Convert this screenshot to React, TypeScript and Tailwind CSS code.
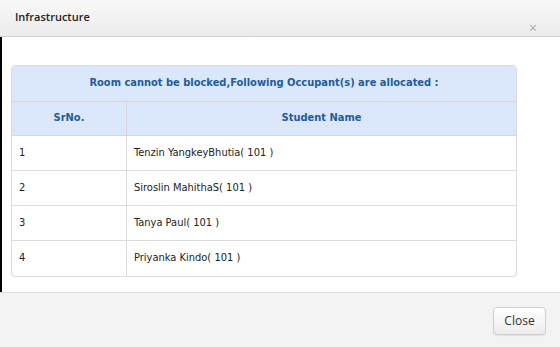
import React from "react";

const rows = [
  { n: "1", name: "Tenzin YangkeyBhutia( 101 )" },
  { n: "2", name: "Siroslin MahithaS( 101 )" },
  { n: "3", name: "Tanya Paul( 101 )" },
  { n: "4", name: "Priyanka Kindo( 101 )" },
];

export default function App() {
  return (
    <div className="w-[560px] h-[347px] bg-white flex flex-col overflow-hidden" style={{ fontFamily: '"Open Sans", sans-serif' }}>
      <div className="h-[37px] shrink-0 flex items-start justify-between bg-gradient-to-b from-[#f8f8f8] to-[#ececec] border-b border-[#cfcfcf] pl-[15px] pr-[23px]">
        <div className="pt-[9px] text-[11px] font-semibold text-[#222]">Infrastructure</div>
        <div className="pt-[20px] text-[14px] leading-[16px] text-[#aaa]">×</div>
      </div>
      <div className="flex-1 border-l-2 border-black pl-[9px] pr-[43px] pt-[28px]">
        <div
          className="border border-[#dcdcdc] rounded-[4px] overflow-hidden"
          style={{ fontFamily: '"DejaVu Sans Condensed", "DejaVu Sans", sans-serif' }}
        >
          <div className="h-[36px] bg-[#dbe8fb] border-b border-[#d6d6d6] flex items-center justify-center text-[11px] font-bold text-[#1f5c99]">
            Room cannot be blocked,Following Occupant(s) are allocated :
          </div>
          <div className="h-[34px] bg-[#dbe8fb] flex text-[11px] font-bold text-[#1f5c99] border-b border-[#d6d6d6]">
            <div className="w-[115px] flex items-center justify-center border-r border-[#d6d6d6]">SrNo.</div>
            <div className="flex-1 flex items-center justify-center">Student Name</div>
          </div>
          {rows.map((r, i) => (
            <div key={r.n} className={`h-[35px] flex text-[11px] text-[#222] ${i < rows.length - 1 ? "border-b border-[#dcdcdc]" : ""}`}>
              <div className="w-[115px] flex items-center pl-[7px] border-r border-[#dcdcdc]">{r.n}</div>
              <div className="flex-1 flex items-center pl-[7px]">{r.name}</div>
            </div>
          ))}
        </div>
      </div>
      <div className="h-[55px] shrink-0 bg-[#f3f3f3] border-t border-[#dedede] flex items-start justify-end pr-[14px] pt-[14px]">
        <button className="h-[28px] w-[53px] rounded-[4px] border border-[#cfcfcf] bg-gradient-to-b from-white to-[#ececec] text-[12px] text-[#333] shadow-[0_1px_1px_rgba(0,0,0,0.08)]">
          Close
        </button>
      </div>
    </div>
  );
}
